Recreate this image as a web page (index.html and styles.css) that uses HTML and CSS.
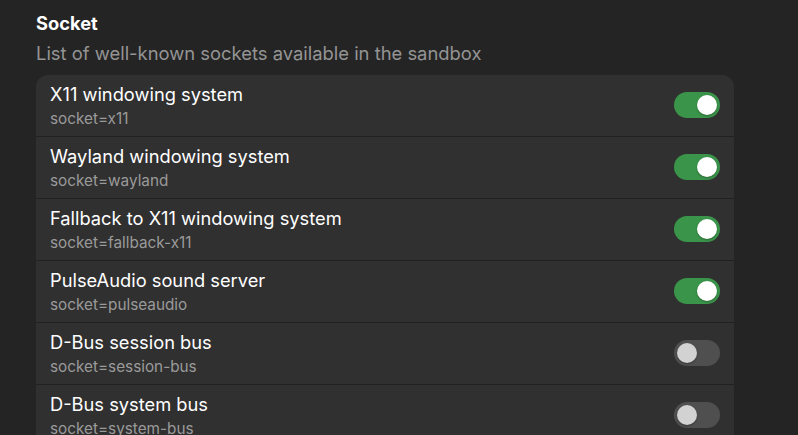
FILE: index.html
```html
<!DOCTYPE html>
<html>
<head>
<meta charset="utf-8">
<link rel="stylesheet" href="styles.css">
</head>
<body>
<div class="page">
  <h2 class="heading">Socket</h2>
  <p class="desc">List of well-known sockets available in the sandbox</p>
  <div class="card">
    <div class="row">
      <div class="text"><div class="title">X11 windowing system</div><div class="sub">socket=x11</div></div>
      <div class="switch on"><span class="knob"></span></div>
    </div>
    <div class="row">
      <div class="text"><div class="title">Wayland windowing system</div><div class="sub">socket=wayland</div></div>
      <div class="switch on"><span class="knob"></span></div>
    </div>
    <div class="row">
      <div class="text"><div class="title">Fallback to X11 windowing system</div><div class="sub">socket=fallback-x11</div></div>
      <div class="switch on"><span class="knob"></span></div>
    </div>
    <div class="row">
      <div class="text"><div class="title">PulseAudio sound server</div><div class="sub">socket=pulseaudio</div></div>
      <div class="switch on"><span class="knob"></span></div>
    </div>
    <div class="row">
      <div class="text"><div class="title">D-Bus session bus</div><div class="sub">socket=session-bus</div></div>
      <div class="switch"><span class="knob"></span></div>
    </div>
    <div class="row">
      <div class="text"><div class="title">D-Bus system bus</div><div class="sub">socket=system-bus</div></div>
      <div class="switch"><span class="knob"></span></div>
    </div>
  </div>
</div>
</body>
</html>
```
FILE: styles.css
```css
html, body {
  margin: 0;
  padding: 0;
  background: #242424;
  height: 100%;
  overflow: hidden;
}
body {
  font-family: Inter, "Noto Sans", sans-serif;
  color: #ffffff;
}
.page {
  width: 698px;
  margin-left: 36px;
  padding-top: 11px;
}
.heading {
  margin: 0;
  font-size: 18.3px;
  font-weight: 700;
  line-height: 24px;
}
.desc {
  margin: 6px 0 0 0;
  font-size: 18.4px;
  line-height: 24px;
  color: #949494;
}
.card {
  margin-top: 10px;
  background: #303030;
  border-radius: 12px;
  overflow: hidden;
}
.row {
  display: flex;
  align-items: center;
  height: 61px;
  padding: 0 14px;
  border-bottom: 1px solid #212121;
}
.text {
  flex: 1;
  display: flex;
  flex-direction: column;
}
.title {
  font-size: 18.3px;
  line-height: 22px;
  color: #ffffff;
}
.sub {
  font-size: 15.3px;
  line-height: 20px;
  color: #9a9a9a;
  margin-top: 4px;
}
.switch {
  width: 46px;
  height: 26px;
  border-radius: 13px;
  background: #4f4f4f;
  position: relative;
  flex: none;
  margin-bottom: 1px;
}
.switch .knob {
  position: absolute;
  top: 3px;
  left: 3px;
  width: 20px;
  height: 20px;
  border-radius: 50%;
  background: #d2d2d2;
  box-shadow: 0 1px 2px rgba(0,0,0,0.3);
}
.switch.on {
  background: #3a944a;
}
.switch.on .knob {
  left: 23px;
  background: #ffffff;
}
```
